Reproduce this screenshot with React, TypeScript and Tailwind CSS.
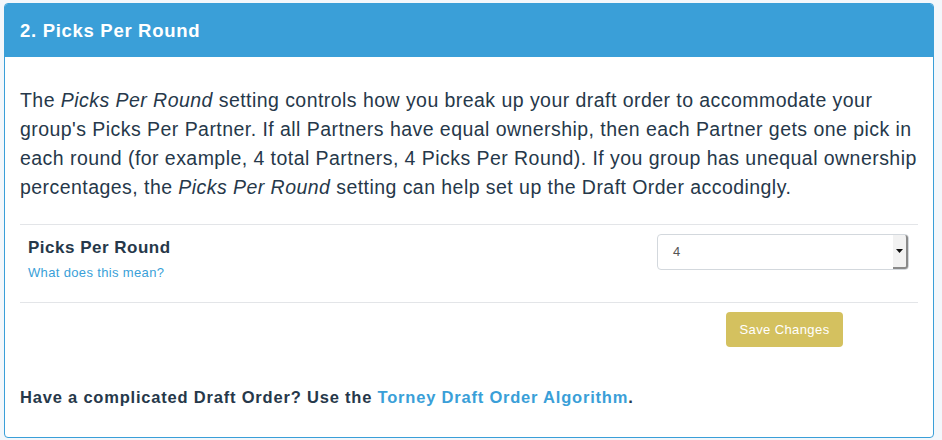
import React from "react";

const font = { fontFamily: '"Liberation Sans", Arial, sans-serif' };

const SelectBox: React.FC<{ value: string }> = ({ value }) => (
  <div className="flex h-[36px] w-[252px] items-stretch rounded-[4px] border border-[#d3d8dd] bg-white">
    <div className="flex flex-1 items-center pl-[15px] text-[13px] text-[#555]">{value}</div>
    <div className="flex w-[15px] items-center justify-center rounded-r-[3px] border-b-2 border-r-2 border-[#8a8a8a] bg-[#f2f2f2]">
      <svg width="7" height="4" viewBox="0 0 7 4">
        <path d="M0 0h7L3.5 4z" fill="#111" />
      </svg>
    </div>
  </div>
);

export default function App() {
  return (
    <div className="min-h-[440px] bg-[#f3f7fb] pl-[4px] pr-[8px] pt-[3px] pb-[5px]" style={font}>
      <div className="overflow-hidden rounded-[4px] border border-[#3a9fd8] bg-white">
        <div className="flex h-[53px] items-center bg-[#3a9fd8] px-[15px] text-[18.5px] font-bold tracking-[0.7px] text-white">
          2. Picks Per Round
        </div>
        <div className="px-[15px] pt-[29px] pb-[27px]">
          <p className="whitespace-nowrap text-[19.5px] leading-[29px] tracking-[0.45px] text-[#26384a]">
            The <i>Picks Per Round</i> setting controls how you break up your draft order to accommodate your
            <br />
            group's Picks Per Partner. If all Partners have equal ownership, then each Partner gets one pick in
            <br />
            each round (for example, 4 total Partners, 4 Picks Per Round). If you group has unequal ownership
            <br />
            percentages, the <i>Picks Per Round</i> setting can help set up the Draft Order accodingly.
          </p>
          <div className="mt-[22px] flex h-[79px] items-start justify-between border-y border-[#e3e5e8] pt-[9px] pl-[8px] pr-[9px]">
            <div className="pt-[3px]">
              <div className="text-[17px] font-bold leading-[22px] tracking-[0.5px] text-[#26384a]">Picks Per Round</div>
              <a className="mt-[4px] block text-[13px] tracking-[0.35px] text-[#3a9fd8]">What does this mean?</a>
            </div>
            <SelectBox value="4" />
          </div>
          <div className="flex justify-end pr-[75px] pt-[9px]">
            <button className="h-[35px] w-[117px] rounded-[4px] bg-[#d4c15f] text-[13px] tracking-[0.4px] text-white">
              Save Changes
            </button>
          </div>
          <p className="mt-[38px] text-[16.5px] font-bold tracking-[0.8px] text-[#26384a]">
            Have a complicated Draft Order? Use the{" "}
            <a className="text-[#3a9fd8]">Torney Draft Order Algorithm</a>.
          </p>
        </div>
      </div>
    </div>
  );
}
